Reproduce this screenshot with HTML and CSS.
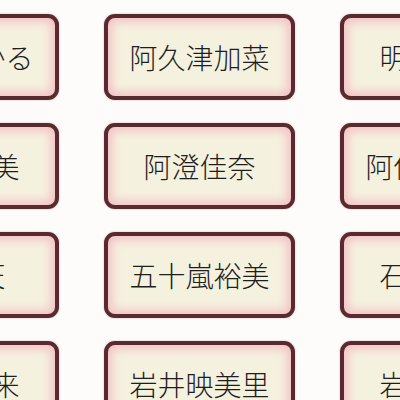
FILE: index.html
```html
<!DOCTYPE html>
<html lang="ja">
<head>
<meta charset="utf-8">
<link rel="stylesheet" href="styles.css">
</head>
<body>
<div class="grid">
  <div class="btn">青木ひかる</div>
  <div class="btn">阿久津加菜</div>
  <div class="btn">明坂聡美</div>
  <div class="btn">浅倉杏美</div>
  <div class="btn">阿澄佳奈</div>
  <div class="btn">阿保ひろみ</div>
  <div class="btn">雨宮天</div>
  <div class="btn">五十嵐裕美</div>
  <div class="btn">石原夏織</div>
  <div class="btn">伊藤美来</div>
  <div class="btn">岩井映美里</div>
  <div class="btn">岩男潤子</div>
</div>
</body>
</html>
```
FILE: styles.css
```css
html, body {
  margin: 0;
  padding: 0;
  background: #fdfcfa;
  overflow: hidden;
  width: 400px;
  height: 400px;
}
.grid {
  display: grid;
  grid-template-columns: 191px 191px 191px;
  grid-auto-rows: 86px;
  column-gap: 45px;
  row-gap: 23px;
  margin-left: -132px;
  padding-top: 14px;
  width: 663px;
}
.btn {
  box-sizing: border-box;
  border: 4px solid #5b2a2e;
  border-radius: 11px;
  background: #f5f1df;
  box-shadow: inset 0 0 10px 4px #f3c2c5, 0 0 2px rgba(90, 42, 47, 0.35);
  display: flex;
  align-items: center;
  justify-content: center;
  font-family: "Noto Sans CJK JP", "Noto Sans", sans-serif;
  font-weight: 300;
  font-size: 28px;
  color: #1e1e1e;
  white-space: nowrap;
}
```
